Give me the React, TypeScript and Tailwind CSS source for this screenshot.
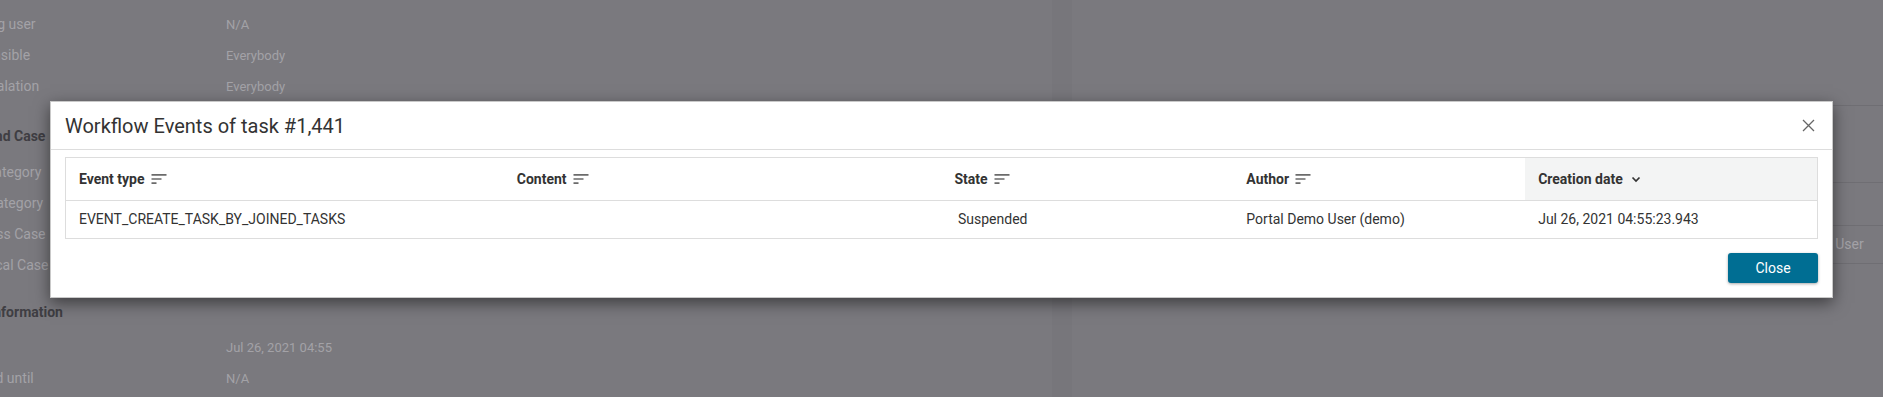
import React from "react";

const SortIcon = () => (
    <svg width="20" height="20" viewBox="0 0 24 24" className="shrink-0 text-[#6b6b6b]" fill="currentColor">
        <path d="M3 18h6v-2H3v2zM3 6v2h18V6H3zm0 7h12v-2H3v2z" />
    </svg>
);

const ChevronDown = () => (
    <svg width="12" height="12" viewBox="0 0 12 12" className="shrink-0 text-[#333]" fill="none" stroke="currentColor" strokeWidth="1.7">
        <path d="M2.5 4.5l3.5 3.5 3.5-3.5" />
    </svg>
);

const CloseIcon = () => (
    <svg width="13" height="13" viewBox="0 0 13 13" className="text-[#666]" fill="none" stroke="currentColor" strokeWidth="1.3">
        <path d="M1 1l11 11M12 1L1 12" />
    </svg>
);

const detailRows = [
    { label: "Working user", value: "N/A" },
    { label: "Responsible", value: "Everybody" },
    { label: "On escalation", value: "Everybody" },
];

const caseRows = ["Task category", "Case category", "Business Case", "Technical Case"];

const columns = [
    { title: "Event type", sorted: false },
    { title: "Content", sorted: false },
    { title: "State", sorted: false },
    { title: "Author", sorted: false },
    { title: "Creation date", sorted: true },
];

const BgRow = ({ label, value, mt = "" }: { label: string; value?: string; mt?: string }) => (
    <div className={`flex items-center h-[31px] ${mt}`}>
        <span className="w-[272px] -ml-[46px] shrink-0 text-[14px] text-[#a3a2a7]">{label}</span>
        <span className="text-[13px] text-[#a3a2a7]">{value}</span>
    </div>
);

const BgHeading = ({ label, mt }: { label: string; mt: string }) => (
    <div className={`flex items-center h-[31px] ${mt}`}>
        <span className="-ml-[46px] text-[14px] font-bold text-[#3f3e43]">{label}</span>
    </div>
);

export default function App() {
    return (
        <div className="relative w-[1883px] h-[397px] overflow-hidden bg-[#7a797e] font-['Roboto','Liberation_Sans',sans-serif]">
            {/* page behind the dialog */}
            <div className="flex h-full">
                <div className="w-[1052px] shrink-0 pt-[9px] overflow-hidden">
                    {detailRows.map(r => (
                        <BgRow key={r.label} label={r.label} value={r.value} />
                    ))}
                    <BgHeading label="Task and Case" mt="mt-[19px]" />
                    {caseRows.map((l, i) => (
                        <BgRow key={l} label={l} value="" mt={i === 0 ? "mt-[5px]" : ""} />
                    ))}
                    <BgHeading label="Time information" mt="mt-[16px]" />
                    <BgRow label="Date" value="Jul 26, 2021 04:55" mt="mt-[4px]" />
                    <BgRow label="Delayed until" value="N/A" />
                </div>
                <div className="w-[20px] shrink-0 bg-[#77767b]" />
                <div className="flex-1 flex flex-col">
                    <div className="h-[106px] border-b border-[#6f6e73]" />
                    <div className="h-[77px] border-b border-[#6f6e73]" />
                    <div className="h-[43px] border-b border-[#6f6e73]" />
                    <div className="h-[38px] border-b border-[#6f6e73] flex items-center pl-[682px]">
                        <span className="text-[14px] text-[#a3a2a7]">Portal Demo User</span>
                    </div>
                </div>
            </div>

            {/* dialog */}
            <div className="absolute left-[50px] top-[101px] w-[1783px] bg-white border border-[#c9c9c9] shadow-[0_5px_15px_rgba(0,0,0,0.5)]">
                <div className="flex items-center justify-between h-[48px] pl-[14px] pr-[17px] border-b border-[#dddddd]">
                    <h2 className="text-[20px] text-[#333]">Workflow Events of task #1,441</h2>
                    <CloseIcon />
                </div>
                <div className="px-[14px] pt-[7px] pb-[14px]">
                    <div className="border border-[#dddddd]">
                        <div className="grid grid-cols-[3fr_3fr_2fr_2fr_2fr] h-[43px] border-b border-[#dddddd]">
                            {columns.map(c => (
                                <div
                                    key={c.title}
                                    className={`flex items-center px-[13px] text-[14px] font-bold text-[#333] ${c.sorted ? "bg-[#f3f4f4] gap-[7px]" : "gap-[4px]"}`}
                                >
                                    <span>{c.title}</span>
                                    {c.sorted ? <ChevronDown /> : <SortIcon />}
                                </div>
                            ))}
                        </div>
                        <div className="grid grid-cols-[3fr_3fr_2fr_2fr_2fr] h-[37px] text-[14px] text-[#333]">
                            <div className="flex items-center px-[13px]">EVENT_CREATE_TASK_BY_JOINED_TASKS</div>
                            <div className="flex items-center px-[13px]"></div>
                            <div className="flex items-center px-[13px]">{"\u00a0"}Suspended</div>
                            <div className="flex items-center px-[13px]">Portal Demo User (demo)</div>
                            <div className="flex items-center px-[13px]">Jul 26, 2021 04:55:23.943</div>
                        </div>
                    </div>
                    <div className="flex justify-end mt-[14px]">
                        <button className="w-[90px] h-[30px] rounded-[3px] bg-[#006e93] text-white text-[14px] shadow-[0_1px_3px_rgba(0,0,0,0.35)]">
                            Close
                        </button>
                    </div>
                </div>
            </div>
        </div>
    );
}
